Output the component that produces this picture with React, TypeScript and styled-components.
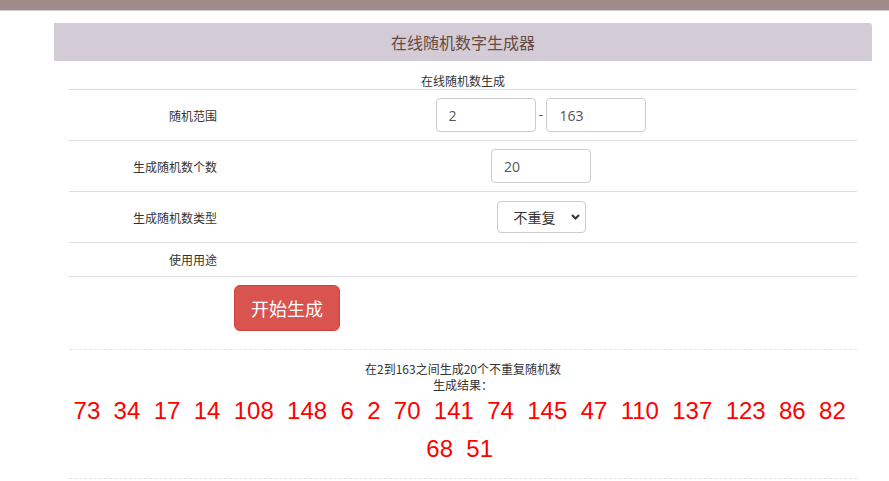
import styled, { createGlobalStyle } from "styled-components";

const GlobalStyle = createGlobalStyle`
    html, body {
        margin: 0;
        padding: 0;
        background: #fff;
    }
    body {
        font-family: "Noto Sans CJK SC", "Noto Sans", sans-serif;
        font-size: 12px;
        line-height: 1.42857;
        color: #333;
    }
`;

const TopBar = styled.div`
    height: 10px;
    background: #9f8a8a;
    border-bottom: 1px solid #d8cfd2;
`;

const Panel = styled.section`
    width: 818px;
    margin: 12px 0 0 54px;
`;

const Header = styled.h1`
    margin: 0;
    height: 38px;
    line-height: 38px;
    background: #d3cbd6;
    border-radius: 0 3px 0 0;
    text-align: center;
    font-size: 16px;
    font-weight: normal;
    color: #6a4a3c;
`;

const Body = styled.div`
    padding: 0 15px;
`;

const Caption = styled.div`
    padding-top: 11px;
    line-height: 17px;
    text-align: center;
    color: #333;
`;

const Row = styled.div`
    display: grid;
    grid-template-columns: 156px 1fr;
    align-items: center;
    border-top: 1px solid #ddd;
`;

const Label = styled.div`
    padding: 8px;
    text-align: right;
    line-height: 17px;
`;

const Value = styled.div<{ $align?: "left" | "center" }>`
    padding: 8px;
    display: flex;
    align-items: center;
    justify-content: ${({ $align }) => ($align === "left" ? "flex-start" : "center")};
    gap: 3px;
    min-height: 17px;
`;

const Input = styled.input`
    box-sizing: border-box;
    width: ${({ width }) => width}px;
    height: 34px;
    padding: 6px 12px;
    border: 1px solid #ccc;
    border-radius: 4px;
    font-family: "Open Sans", "Noto Sans", sans-serif;
    font-size: 14px;
    color: #555;
    background: #fff;
    outline: none;
`;

const Dash = styled.span`
    font-size: 14px;
    color: #555;
    margin-top: -4px;
`;

const SelectWrap = styled.span`
    position: relative;
    display: inline-block;
    margin: 1px 0;
`;

const Select = styled.select`
    appearance: none;
    box-sizing: border-box;
    width: 89px;
    height: 32px;
    padding: 0 0 0 16px;
    border: 1px solid #ccc;
    border-radius: 4px;
    background: #fff;
    font-family: "Noto Sans CJK SC", sans-serif;
    font-size: 14px;
    color: #333;
    outline: none;
`;

const Chevron = styled.svg`
    position: absolute;
    right: 6px;
    top: 13px;
    pointer-events: none;
`;

const StartButton = styled.button`
    margin-left: 1px;
    padding: 10px 16px;
    font-family: "Noto Sans CJK SC", sans-serif;
    font-size: 18px;
    line-height: 24px;
    color: #fff;
    background: #d9534f;
    border: 1px solid #d43f3a;
    border-radius: 6px;
    cursor: pointer;
`;

const Result = styled.div`
    margin-top: 10px;
    border-top: 1px dashed #e2e2e2;
    border-bottom: 1px dashed #e2e2e2;
    padding: 11px 0 10px;
    text-align: center;
`;

const Summary = styled.p`
    margin: 0;
    line-height: 16px;
`;

const Numbers = styled.div`
    margin-top: -1px;
    font-family: "Liberation Sans", Arial, sans-serif;
    font-size: 24px;
    line-height: 38px;
    color: #f00;
`;

const numbers = [73, 34, 17, 14, 108, 148, 6, 2, 70, 141, 74, 145, 47, 110, 137, 123, 86, 82, 68, 51];

export default function App() {
    return (
        <>
            <GlobalStyle />
            <TopBar />
            <Panel>
                <Header>在线随机数字生成器</Header>
                <Body>
                    <Caption>在线随机数生成</Caption>
                    <Row>
                        <Label>随机范围</Label>
                        <Value>
                            <Input width={100} defaultValue="2" />
                            <Dash>-</Dash>
                            <Input width={100} defaultValue="163" />
                        </Value>
                    </Row>
                    <Row>
                        <Label>生成随机数个数</Label>
                        <Value>
                            <Input width={100} defaultValue="20" />
                        </Value>
                    </Row>
                    <Row>
                        <Label>生成随机数类型</Label>
                        <Value>
                            <SelectWrap>
                                <Select defaultValue="1">
                                    <option value="1">不重复</option>
                                    <option value="0">可重复</option>
                                </Select>
                                <Chevron width="9" height="6" viewBox="0 0 9 6">
                                    <path d="M1 1l3.5 3.5L8 1" fill="none" stroke="#333" strokeWidth="2" />
                                </Chevron>
                            </SelectWrap>
                        </Value>
                    </Row>
                    <Row>
                        <Label>使用用途</Label>
                        <Value />
                    </Row>
                    <Row>
                        <div />
                        <Value $align="left">
                            <StartButton>开始生成</StartButton>
                        </Value>
                    </Row>
                    <Result>
                        <Summary>在2到163之间生成20个不重复随机数</Summary>
                        <Summary>生成结果：</Summary>
                        <Numbers>{numbers.map((n) => `${n}\u00a0 `).join("")}</Numbers>
                    </Result>
                </Body>
            </Panel>
        </>
    );
}
